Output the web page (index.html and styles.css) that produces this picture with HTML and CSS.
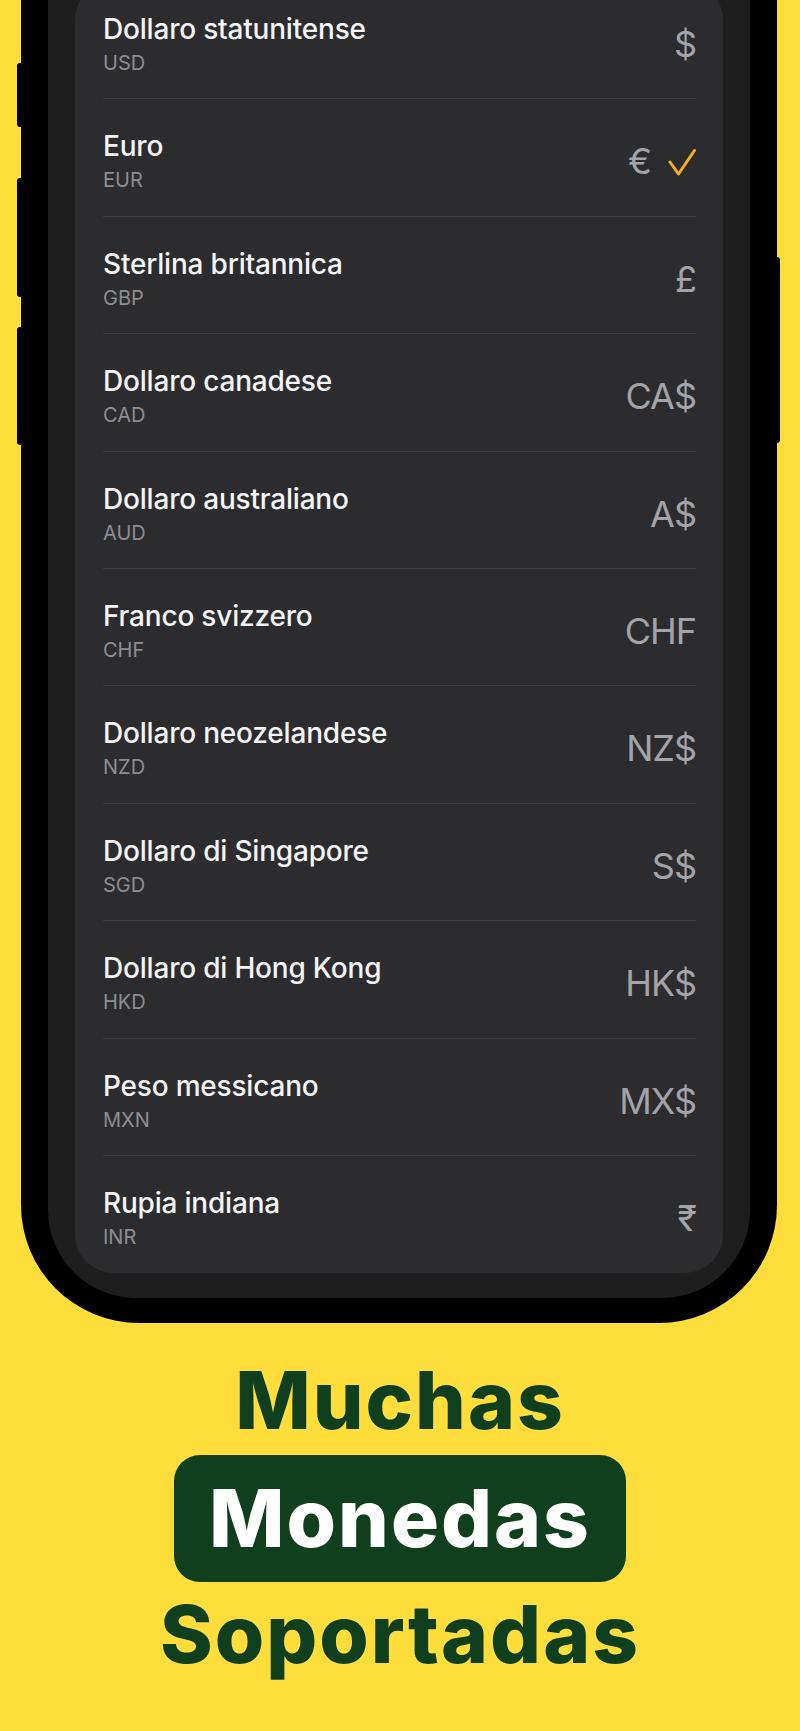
FILE: index.html
```html
<!DOCTYPE html>
<html lang="it">

<head>
    <meta charset="UTF-8">
    <title>Valute</title>
    <meta name="viewport" content="width=device-width, initial-scale=1.0">
    <link rel="stylesheet" href="styles.css">
</head>

<body>
    <div class="phone">
        <span class="side-btn btn-action"></span>
        <span class="side-btn btn-vol-up"></span>
        <span class="side-btn btn-vol-down"></span>
        <span class="side-btn btn-power"></span>

        <div class="screen">
            <ul class="currency-list">
                <li class="row">
                    <div class="names"><div class="name">Dollaro statunitense</div><div class="code">USD</div></div>
                    <div class="symbol">$</div>
                </li>
                <li class="row">
                    <div class="names"><div class="name">Euro</div><div class="code">EUR</div></div>
                    <div class="symbol">€
                        <svg class="check" width="28" height="28" viewBox="0 0 28 28">
                            <polyline points="2,14 10.5,26 26.5,2.5" fill="none" stroke="#f5ae1f" stroke-width="3" stroke-linecap="round" stroke-linejoin="round" />
                        </svg>
                    </div>
                </li>
                <li class="row">
                    <div class="names"><div class="name">Sterlina britannica</div><div class="code">GBP</div></div>
                    <div class="symbol">£</div>
                </li>
                <li class="row">
                    <div class="names"><div class="name">Dollaro canadese</div><div class="code">CAD</div></div>
                    <div class="symbol">CA$</div>
                </li>
                <li class="row">
                    <div class="names"><div class="name">Dollaro australiano</div><div class="code">AUD</div></div>
                    <div class="symbol">A$</div>
                </li>
                <li class="row">
                    <div class="names"><div class="name">Franco svizzero</div><div class="code">CHF</div></div>
                    <div class="symbol">CHF</div>
                </li>
                <li class="row">
                    <div class="names"><div class="name">Dollaro neozelandese</div><div class="code">NZD</div></div>
                    <div class="symbol">NZ$</div>
                </li>
                <li class="row">
                    <div class="names"><div class="name">Dollaro di Singapore</div><div class="code">SGD</div></div>
                    <div class="symbol">S$</div>
                </li>
                <li class="row">
                    <div class="names"><div class="name">Dollaro di Hong Kong</div><div class="code">HKD</div></div>
                    <div class="symbol">HK$</div>
                </li>
                <li class="row">
                    <div class="names"><div class="name">Peso messicano</div><div class="code">MXN</div></div>
                    <div class="symbol">MX$</div>
                </li>
                <li class="row">
                    <div class="names"><div class="name">Rupia indiana</div><div class="code">INR</div></div>
                    <div class="symbol">₹</div>
                </li>
            </ul>
        </div>
    </div>

    <div class="headline">
        <div class="line">Muchas</div>
        <div class="pill">Monedas</div>
        <div class="line">Soportadas</div>
    </div>
</body>

</html>
```

FILE: styles.css
```css
html,
body {
    margin: 0;
    padding: 0;
}

body {
    width: 800px;
    height: 1731px;
    overflow: hidden;
    background-color: #ffde3b;
    font-family: "Inter", "Liberation Sans", sans-serif;
}

/* telefono */
.phone {
    position: relative;
    width: 756px;
    margin: -40px 0 0 21px;
    padding: 0 27px 25px;
    box-sizing: border-box;
    background-color: #000;
    border-radius: 0 0 118px 118px;
}

.side-btn {
    position: absolute;
    width: 6px;
    background-color: #000;
    border-radius: 3px;
}

.btn-action {
    left: -4px;
    top: 103px;
    height: 64px;
}

.btn-vol-up {
    left: -4px;
    top: 218px;
    height: 119px;
}

.btn-vol-down {
    left: -4px;
    top: 367px;
    height: 118px;
}

.btn-power {
    right: -3px;
    top: 297px;
    height: 186px;
}

.screen {
    padding: 22px 27px 25px;
    background-color: #1e1e1f;
    border-radius: 0 0 88px 88px;
}

/* lista valute */
.currency-list {
    list-style: none;
    margin: 0;
    padding: 0 27px 0 28px;
    background-color: #2c2c2e;
    border-radius: 38px;
}

.row {
    display: flex;
    justify-content: space-between;
    align-items: flex-start;
    height: 117.4px;
    box-sizing: border-box;
    border-bottom: 1px solid #3c3c3f;
}

.row:last-child {
    border-bottom: none;
}

.names {
    padding-top: 30px;
}

.name {
    font-size: 28px;
    font-weight: 500;
    line-height: 34px;
    color: #f4f4f5;
    letter-spacing: -0.2px;
}

.code {
    margin-top: 5px;
    font-size: 20px;
    line-height: 24px;
    color: #8d8d92;
}

.symbol {
    display: flex;
    align-items: center;
    gap: 17px;
    margin-top: 44px;
    font-size: 36px;
    line-height: 36px;
    color: #a3a3a8;
    letter-spacing: -1px;
}

.check {
    margin-top: 2px;
}

/* titolo */
.headline {
    display: flex;
    flex-direction: column;
    align-items: center;
    padding-top: 29px;
    font-weight: 800;
    font-size: 80px;
    line-height: 96px;
    color: #0f3f1d;
    letter-spacing: 2px;
}

.pill {
    margin: 7px 0 4px;
    padding: 15px 35px 16px;
    background-color: #0f3f1d;
    color: #fff;
    border-radius: 26px;
}
```
